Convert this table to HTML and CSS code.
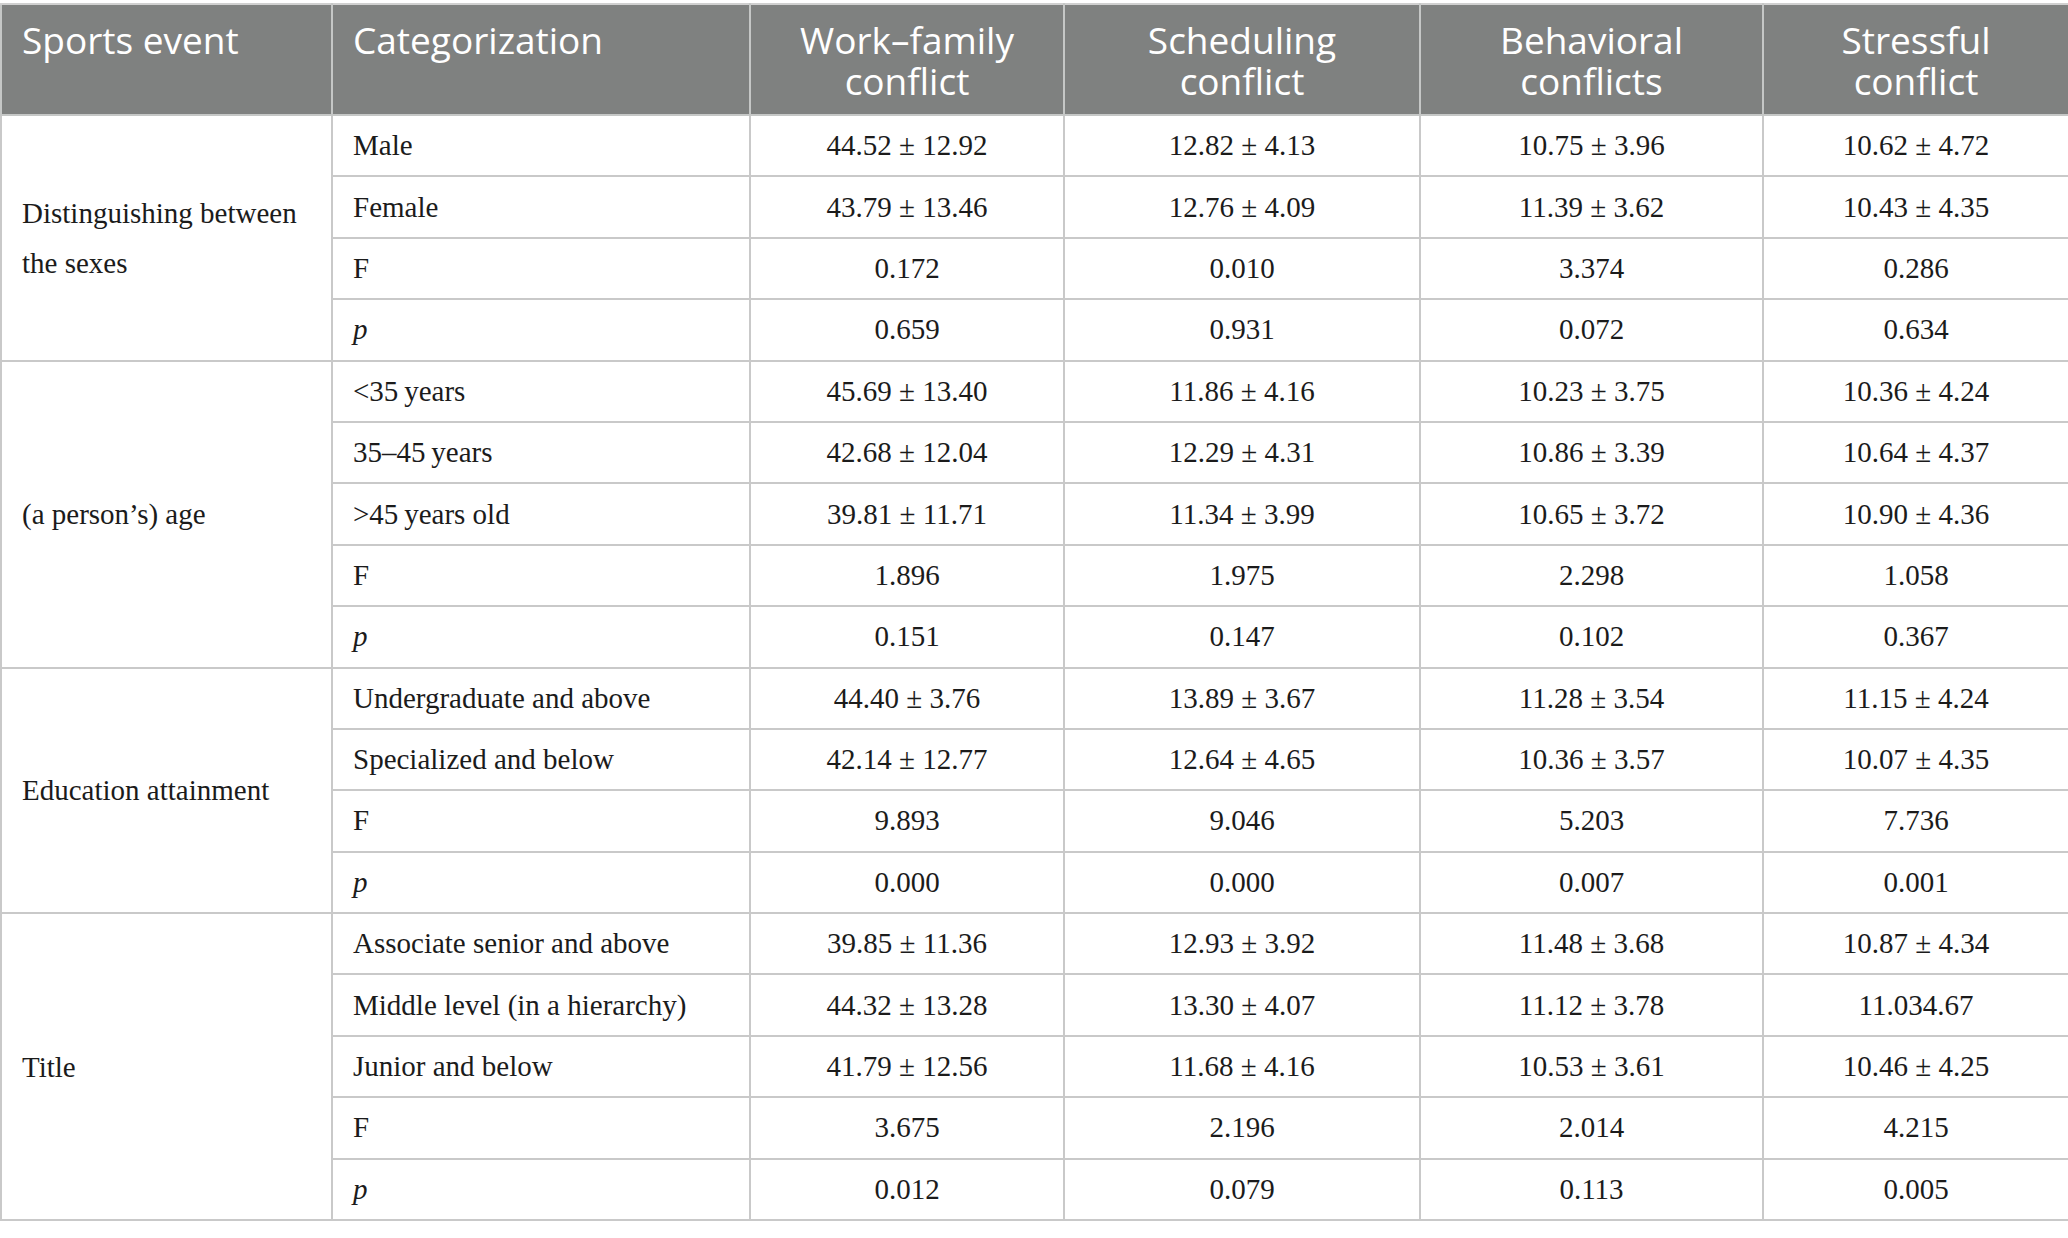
FILE: index.html
```html
<!DOCTYPE html>
<html lang="en">
<head>
<meta charset="UTF-8">
<meta name="viewport" content="width=device-width, initial-scale=1.0">
<title>Conflict by demographic group</title>
<link rel="stylesheet" href="styles.css">
</head>
<body>
<table id="results">
    <colgroup>
        <col class="c-event">
        <col class="c-cat">
        <col class="c-wf">
        <col class="c-sch">
        <col class="c-beh">
        <col class="c-str">
    </colgroup>
    <thead>
        <tr>
            <th class="left">Sports event</th>
            <th class="left">Categorization</th>
            <th>Work–family<br>conflict</th>
            <th>Scheduling<br>conflict</th>
            <th>Behavioral<br>conflicts</th>
            <th>Stressful<br>conflict</th>
        </tr>
    </thead>
    <tbody>
        <tr>
            <td class="group" rowspan="4">Distinguishing between the sexes</td>
            <td class="cat">Male</td>
            <td>44.52 ± 12.92</td><td>12.82 ± 4.13</td><td>10.75 ± 3.96</td><td>10.62 ± 4.72</td>
        </tr>
        <tr>
            <td class="cat">Female</td>
            <td>43.79 ± 13.46</td><td>12.76 ± 4.09</td><td>11.39 ± 3.62</td><td>10.43 ± 4.35</td>
        </tr>
        <tr>
            <td class="cat">F</td>
            <td>0.172</td><td>0.010</td><td>3.374</td><td>0.286</td>
        </tr>
        <tr>
            <td class="cat"><i>p</i></td>
            <td>0.659</td><td>0.931</td><td>0.072</td><td>0.634</td>
        </tr>

        <tr>
            <td class="group" rowspan="5">(a person’s) age</td>
            <td class="cat">&lt;35&#8201;years</td>
            <td>45.69 ± 13.40</td><td>11.86 ± 4.16</td><td>10.23 ± 3.75</td><td>10.36 ± 4.24</td>
        </tr>
        <tr>
            <td class="cat">35–45&#8201;years</td>
            <td>42.68 ± 12.04</td><td>12.29 ± 4.31</td><td>10.86 ± 3.39</td><td>10.64 ± 4.37</td>
        </tr>
        <tr>
            <td class="cat">&gt;45&#8201;years old</td>
            <td>39.81 ± 11.71</td><td>11.34 ± 3.99</td><td>10.65 ± 3.72</td><td>10.90 ± 4.36</td>
        </tr>
        <tr>
            <td class="cat">F</td>
            <td>1.896</td><td>1.975</td><td>2.298</td><td>1.058</td>
        </tr>
        <tr>
            <td class="cat"><i>p</i></td>
            <td>0.151</td><td>0.147</td><td>0.102</td><td>0.367</td>
        </tr>

        <tr>
            <td class="group" rowspan="4">Education attainment</td>
            <td class="cat">Undergraduate and above</td>
            <td>44.40 ± 3.76</td><td>13.89 ± 3.67</td><td>11.28 ± 3.54</td><td>11.15 ± 4.24</td>
        </tr>
        <tr>
            <td class="cat">Specialized and below</td>
            <td>42.14 ± 12.77</td><td>12.64 ± 4.65</td><td>10.36 ± 3.57</td><td>10.07 ± 4.35</td>
        </tr>
        <tr>
            <td class="cat">F</td>
            <td>9.893</td><td>9.046</td><td>5.203</td><td>7.736</td>
        </tr>
        <tr>
            <td class="cat"><i>p</i></td>
            <td>0.000</td><td>0.000</td><td>0.007</td><td>0.001</td>
        </tr>

        <tr>
            <td class="group" rowspan="5">Title</td>
            <td class="cat">Associate senior and above</td>
            <td>39.85 ± 11.36</td><td>12.93 ± 3.92</td><td>11.48 ± 3.68</td><td>10.87 ± 4.34</td>
        </tr>
        <tr>
            <td class="cat">Middle level (in a hierarchy)</td>
            <td>44.32 ± 13.28</td><td>13.30 ± 4.07</td><td>11.12 ± 3.78</td><td>11.034.67</td>
        </tr>
        <tr>
            <td class="cat">Junior and below</td>
            <td>41.79 ± 12.56</td><td>11.68 ± 4.16</td><td>10.53 ± 3.61</td><td>10.46 ± 4.25</td>
        </tr>
        <tr>
            <td class="cat">F</td>
            <td>3.675</td><td>2.196</td><td>2.014</td><td>4.215</td>
        </tr>
        <tr>
            <td class="cat"><i>p</i></td>
            <td>0.012</td><td>0.079</td><td>0.113</td><td>0.005</td>
        </tr>
    </tbody>
</table>
</body>
</html>
```

FILE: styles.css
```css
body {
    margin: 3px 0 0 0;
    background: #fff;
    font-family: "Liberation Serif", "Times New Roman", serif;
    color: #1b1b1b;
}
#results {
    width: 2068px;
    border-collapse: collapse;
    table-layout: fixed;
}
.c-event { width: 331px; }
.c-cat { width: 418px; }
.c-wf { width: 314px; }
.c-sch { width: 356px; }
.c-beh { width: 343px; }
.c-str { width: 306px; }
#results th {
    background-color: #7f8180;
    color: #fff;
    font-family: "Open Sans", "Noto Sans", sans-serif;
    font-weight: normal;
    font-size: 37px;
    line-height: 41px;
    text-align: center;
    vertical-align: top;
    height: 111px;
    padding: 14px 20px 0 20px;
    box-sizing: border-box;
    border: 2px solid #c5c7c6;
    border-top-color: #d0d0d0;
}
#results th.left {
    text-align: left;
}
#results td {
    border: 2px solid #c9c9c9;
    height: 61.4px;
    padding: 0 20px;
    font-size: 29px;
    text-align: center;
    vertical-align: middle;
    box-sizing: border-box;
}
#results td.cat,
#results td.group {
    text-align: left;
}
#results td.group {
    line-height: 50px;
}
```
